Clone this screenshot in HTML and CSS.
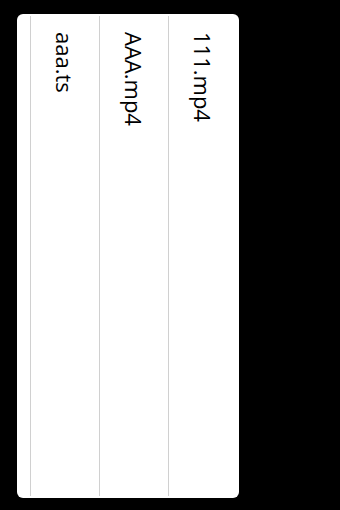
FILE: index.html
```html
<!DOCTYPE html>
<html lang="en">
<head>
    <meta charset="UTF-8">
    <meta name="viewport" content="width=device-width, initial-scale=1.0">
    <title>Files</title>
    <link rel="stylesheet" href="styles.css">
</head>
<body>
    <div class="card">
        <ul class="file-list">
            <li class="file-item">111.mp4</li>
            <li class="file-item">AAA.mp4</li>
            <li class="file-item">aaa.ts</li>
        </ul>
    </div>
</body>
</html>
```

FILE: styles.css
```css
html, body {
    margin: 0;
    padding: 0;
    background-color: #000;
}
body {
    font-family: 'Open Sans', 'Noto Sans', sans-serif;
    width: 340px;
    height: 510px;
    overflow: hidden;
}
.card {
    margin: 14px 0 0 17px;
    width: 222px;
    height: 484px;
    box-sizing: border-box;
    padding: 2px 2px 2px 0;
    background: #fff;
    border-radius: 6px;
    display: flex;
    justify-content: flex-end;
}
.file-list {
    writing-mode: vertical-rl;
    list-style: none;
    margin: 0;
    padding: 0;
    height: 100%;
}
.file-item {
    width: 68px;
    line-height: 68px;
    border-left: 1px solid #d0d0d0;
    padding: 16px 0 0 0;
    font-size: 22px;
    color: #000;
    white-space: nowrap;
}
```
